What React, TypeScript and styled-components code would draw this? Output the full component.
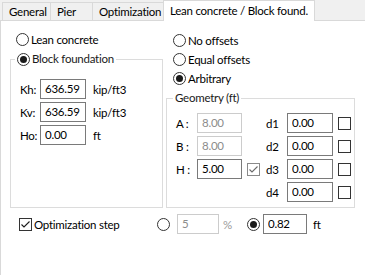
import React from 'react';
import styled, { createGlobalStyle } from 'styled-components';

const GlobalStyle = createGlobalStyle`
  html, body {
    margin: 0;
    padding: 0;
    background: #ffffff;
  }
  body {
    font-family: 'Lato', 'Liberation Sans', sans-serif;
    font-size: 11.5px;
    letter-spacing: -0.25px;
    color: #000;
  }
`;

const Window = styled.div`
  width: 365px;
  height: 275px;
  overflow: hidden;
  background: #fff;
`;

const TabBar = styled.div`
  display: flex;
  align-items: flex-end;
  height: 20px;
  padding-left: 2px;
  background: #f0f0f0;
  border-bottom: 1px solid #d9d9d9;
`;

const Tab = styled.div<{ $w: number; $active?: boolean }>`
  box-sizing: border-box;
  width: ${(p) => p.$w}px;
  height: ${(p) => (p.$active ? 21 : 18)}px;
  margin-bottom: ${(p) => (p.$active ? -1 : 0)}px;
  padding-left: 6px;
  display: flex;
  align-items: center;
  background: ${(p) => (p.$active ? '#fff' : '#f0f0f0')};
  border: 1px solid #d9d9d9;
  border-bottom: none;
  border-right: ${(p) => (p.$active ? '1px solid #d9d9d9' : 'none')};
  white-space: nowrap;
  padding-bottom: ${(p) => (p.$active ? 2 : 0)}px;
`;

const Panel = styled.div`
  border-left: 1px solid #d9d9d9;
  padding-left: 9px;
  height: 254px;
`;

const Columns = styled.div`
  display: flex;
  gap: 3px;
  height: 187px;
`;

const Column = styled.div<{ $w: number; $top: number }>`
  width: ${(p) => p.$w}px;
  padding-top: ${(p) => p.$top}px;
  display: flex;
  flex-direction: column;
`;

const OptionRow = styled.label<{ $indent: number }>`
  display: flex;
  align-items: center;
  gap: 2px;
  height: 19px;
  margin-left: ${(p) => p.$indent}px;
  white-space: nowrap;
`;

const RadioDot = styled.span<{ $checked?: boolean }>`
  box-sizing: border-box;
  width: 13px;
  height: 13px;
  flex: none;
  border-radius: 50%;
  border: 1px solid #333;
  background: #fff;
  display: flex;
  align-items: center;
  justify-content: center;
  &::after {
    content: '';
    width: 7px;
    height: 7px;
    border-radius: 50%;
    background: ${(p) => (p.$checked ? '#1a1a1a' : 'transparent')};
  }
`;

const Box = styled.span<{ $dim?: boolean }>`
  box-sizing: border-box;
  width: 13px;
  height: 13px;
  flex: none;
  border: 1px solid ${(p) => (p.$dim ? '#8a8a8a' : '#333')};
  background: #fff;
  display: flex;
  align-items: center;
  justify-content: center;
`;

const Group = styled.fieldset<{ $top: number; $legendGap: number }>`
  flex: 1;
  margin: ${(p) => p.$top}px 0 0 0;
  padding: ${(p) => p.$legendGap}px 0 0 9px;
  border: 1px solid #dcdcdc;
  min-width: 0;
`;

const GroupTitle = styled.legend<{ $shift: number }>`
  padding: 0 2px;
  margin-left: ${(p) => p.$shift}px;
  line-height: 16px;
  color: #1a1a1a;
`;

const TitleOption = styled.label`
  display: flex;
  align-items: center;
  gap: 2px;
  height: 18px;
`;

const FieldRows = styled.div`
  display: flex;
  flex-direction: column;
  gap: 3px;
`;

const FieldRow = styled.div`
  display: flex;
  align-items: center;
  height: 20px;
`;

const FieldLabel = styled.span<{ $w: number }>`
  width: ${(p) => p.$w}px;
  flex: none;
`;

const Field = styled.input<{ $w: number }>`
  box-sizing: border-box;
  width: ${(p) => p.$w}px;
  height: 20px;
  margin: 0;
  padding: 0 0 1px 4px;
  border: 1px solid ${(p) => (p.disabled ? '#cccccc' : '#7a7a7a')};
  border-radius: 0;
  background: #fff;
  font: inherit;
  letter-spacing: inherit;
  color: ${(p) => (p.disabled ? '#8c8c8c' : '#000')};
  outline: none;
  flex: none;
`;

const Unit = styled.span<{ $gap: number; $dim?: boolean }>`
  margin-left: ${(p) => p.$gap}px;
  color: ${(p) => (p.$dim ? '#9a9a9a' : '#000')};
`;

const GeoGrid = styled.div`
  display: grid;
  grid-template-columns: 21px 45px 18px 27px 46px 18px;
  grid-auto-rows: 20px;
  row-gap: 3px;
  align-items: center;
`;

const GeoLabel = styled.span<{ $col: number }>`
  grid-column: ${(p) => p.$col};
  padding-left: ${(p) => (p.$col === 4 ? 6 : 0)}px;
`;

const GeoCheck = styled.div<{ $col: number }>`
  grid-column: ${(p) => p.$col};
  padding-left: 5px;
  display: flex;
`;

const StepRow = styled.div`
  display: flex;
  align-items: center;
  height: 20px;
  margin-top: 6px;
  padding-left: 9px;
`;

const StepCheck = styled.label`
  display: flex;
  align-items: center;
  gap: 2px;
  width: 138px;
  flex: none;
`;

const Tick = ({ color }: { color: string }) => (
  <svg width="11" height="11" viewBox="0 0 11 11">
    <polyline points="1.5,5.5 4,8 9.5,2.5" fill="none" stroke={color} strokeWidth="1.1" />
  </svg>
);

const Radio = ({ label, checked, indent }: { label: string; checked?: boolean; indent: number }) => (
  <OptionRow $indent={indent}>
    <RadioDot $checked={checked} />
    {label}
  </OptionRow>
);

const soil = [
  { label: 'Kh:', value: '636.59', unit: 'kip/ft3' },
  { label: 'Kv:', value: '636.59', unit: 'kip/ft3' },
  { label: 'Ho:', value: '0.00', unit: 'ft' },
];

const geometry = [
  { label: 'A :', value: '8.00', off: true, d: 'd1' },
  { label: 'B :', value: '8.00', off: true, d: 'd2' },
  { label: 'H :', value: '5.00', off: false, d: 'd3', tick: true },
  { label: '', value: '', off: false, d: 'd4' },
];

export default function App() {
  return (
    <Window>
      <GlobalStyle />
      <TabBar>
        <Tab $w={48}>General</Tab>
        <Tab $w={42}>Pier</Tab>
        <Tab $w={71}>Optimization</Tab>
        <Tab $w={152} $active>
          Lean concrete / Block found.
        </Tab>
      </TabBar>
      <Panel>
        <Columns>
          <Column $w={153} $top={9}>
            <Radio label="Lean concrete" indent={6} />
            <Group $top={1} $legendGap={11}>
              <GroupTitle $shift={-5}>
                <TitleOption>
                  <RadioDot $checked />
                  Block foundation
                </TitleOption>
              </GroupTitle>
              <FieldRows>
                {soil.map((s) => (
                  <FieldRow key={s.label}>
                    <FieldLabel $w={20}>{s.label}</FieldLabel>
                    <Field $w={46} readOnly value={s.value} />
                    <Unit $gap={7}>{s.unit}</Unit>
                  </FieldRow>
                ))}
              </FieldRows>
            </Group>
          </Column>
          <Column $w={189} $top={10}>
            <Radio label="No offsets" indent={7} />
            <Radio label="Equal offsets" indent={7} />
            <Radio label="Arbitrary" checked indent={7} />
            <Group $top={2} $legendGap={7}>
              <GroupTitle $shift={-3}>Geometry (ft)</GroupTitle>
              <GeoGrid>
                {geometry.map((g) => (
                  <React.Fragment key={g.d}>
                    {g.label ? (
                      <>
                        <GeoLabel $col={1}>{g.label}</GeoLabel>
                        <Field $w={45} readOnly disabled={g.off} value={g.value} style={{ gridColumn: 2 }} />
                      </>
                    ) : null}
                    {g.tick ? (
                      <GeoCheck $col={3}>
                        <Box $dim>
                          <Tick color="#6a6a6a" />
                        </Box>
                      </GeoCheck>
                    ) : null}
                    <GeoLabel $col={4}>{g.d}</GeoLabel>
                    <Field $w={46} readOnly value="0.00" style={{ gridColumn: 5 }} />
                    <GeoCheck $col={6}>
                      <Box />
                    </GeoCheck>
                  </React.Fragment>
                ))}
              </GeoGrid>
            </Group>
          </Column>
        </Columns>
        <StepRow>
          <StepCheck>
            <Box>
              <Tick color="#1a1a1a" />
            </Box>
            Optimization step
          </StepCheck>
          <RadioDot />
          <Field $w={42} readOnly disabled value="5" style={{ marginLeft: 7 }} />
          <Unit $gap={4} $dim style={{ width: 24 }}>
            %
          </Unit>
          <RadioDot $checked />
          <Field $w={44} readOnly value="0.82" style={{ marginLeft: 3 }} />
          <Unit $gap={6}>ft</Unit>
        </StepRow>
      </Panel>
    </Window>
  );
}
